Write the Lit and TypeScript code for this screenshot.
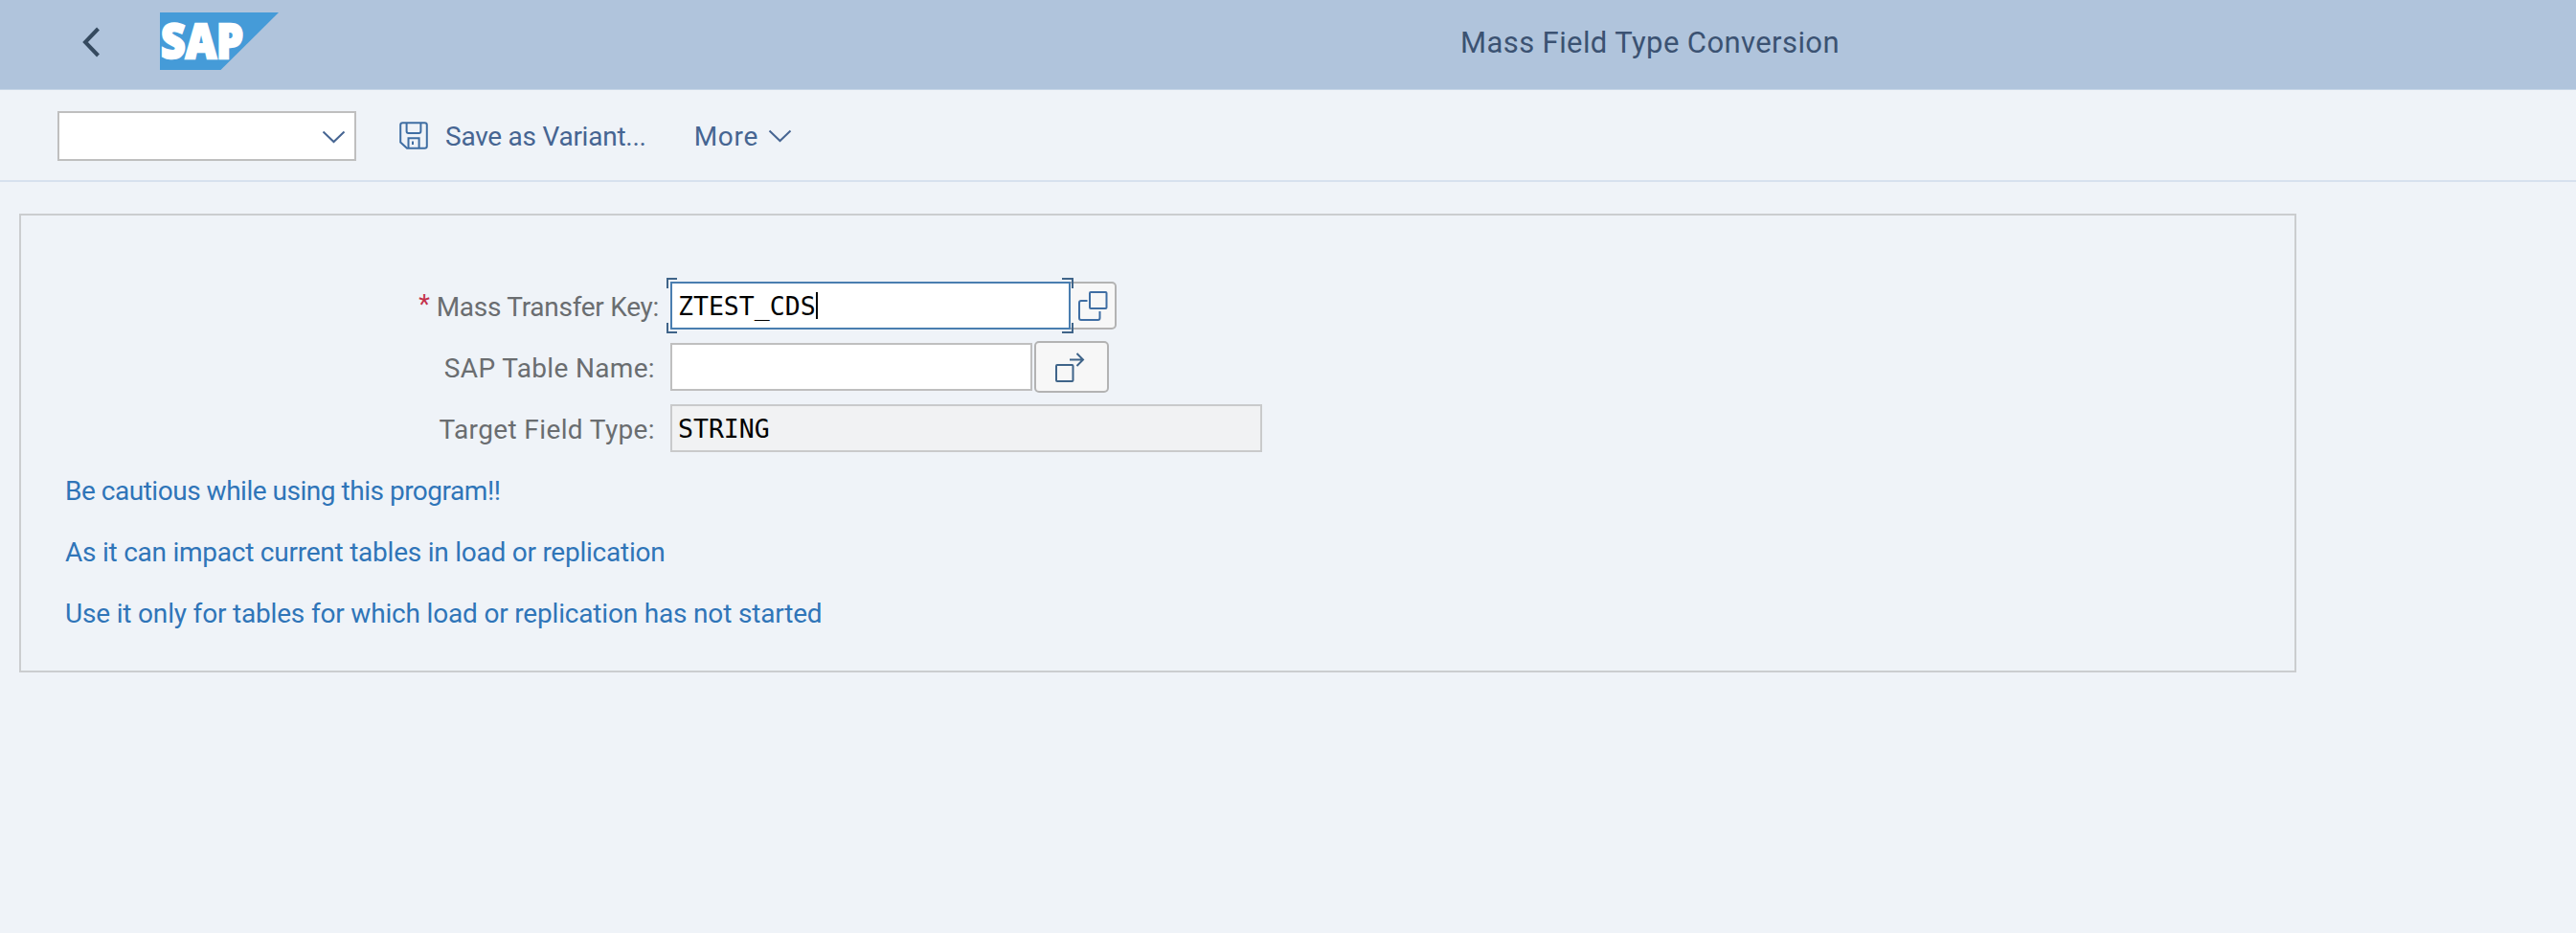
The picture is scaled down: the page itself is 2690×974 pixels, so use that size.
import { LitElement, html, css, svg } from 'lit';
import { customElement, property, state } from 'lit/decorators.js';

const chevronDown = svg`<path d="M1.5 1.5 L12.5 12 L23.5 1.5" fill="none" stroke="currentColor" stroke-width="2"/>`;

@customElement('shell-header')
class ShellHeader extends LitElement {
  @property() heading = '';

  static styles = css`
    :host {
      display: flex;
      align-items: flex-start;
      box-sizing: border-box;
      height: 94px;
      background: #b0c4dc;
      border-bottom: 1px solid #c6d5e7;
    }
    .back { width: 20px; height: 34px; margin: 27px 0 0 85px; }
    .logo { width: 124px; height: 60px; margin: 13px 0 0 62px; overflow: visible; }
    .logo text { font-family: "Open Sans", sans-serif; font-weight: 800; font-size: 50px; }
    .title {
      margin: 0 0 0 1234px;
      font-size: 31px;
      font-weight: 400;
      line-height: 90px;
      letter-spacing: 0.4px;
      color: #3b5272;
      white-space: nowrap;
    }
  `;

  render() {
    return html`
      <svg class="back" viewBox="0 0 20 34">
        <path d="M17.5 3 L4 17 L17.5 31" fill="none" stroke="#354a5f" stroke-width="4"/>
      </svg>
      <svg class="logo" viewBox="0 0 124 60">
        <path d="M0 0 H124 L63.5 60 H0 Z" fill="#459bd8"/>
        <text x="1" y="47.5" textLength="86" lengthAdjust="spacingAndGlyphs"
          fill="#fff" stroke="#fff" stroke-width="2.4">SAP</text>
      </svg>
      <h1 class="title">${this.heading}</h1>
    `;
  }
}

@customElement('action-bar')
class ActionBar extends LitElement {
  static styles = css`
    :host {
      display: flex;
      align-items: center;
      box-sizing: border-box;
      height: 96px;
      padding: 1px 0 0 60px;
      border-bottom: 2px solid #d7e1ee;
      color: #466592;
      font-size: 28px;
    }
    .combo {
      display: flex;
      align-items: center;
      justify-content: flex-end;
      box-sizing: border-box;
      width: 312px;
      height: 52px;
      padding: 2px 9px 0 0;
      background: #fff;
      border: 2px solid #bfbfbf;
    }
    .chevron { width: 25px; height: 14px; }
    .item { display: flex; align-items: center; line-height: 34px; padding-top: 2px; white-space: nowrap; }
    .save { margin-left: 45px; gap: 18px; letter-spacing: -0.25px; }
    .more { margin-left: 50px; gap: 10px; letter-spacing: 0.7px; }
    .disk { width: 30px; height: 29px; margin-top: -3px; }
    .item .chevron { margin-top: -2px; }
  `;

  render() {
    return html`
      <div class="combo"><svg class="chevron" viewBox="0 0 25 14">${chevronDown}</svg></div>
      <div class="item save">
        <svg class="disk" viewBox="0 0 30 29" fill="none" stroke="#3f6ea3" stroke-width="2">
          <path d="M3.5 1.2 H26.5 Q28.8 1.2 28.8 3.5 V25.5 Q28.8 27.8 26.5 27.8 H8 L1.2 21.5 V3.5 Q1.2 1.2 3.5 1.2 Z"/>
          <path d="M7.6 1.5 V10 Q7.6 11.9 9.5 11.9 H20.5 Q22.4 11.9 22.4 10 V1.5"/>
          <path d="M9.5 27.5 V17.3 H20.6 V27.5 M14 20.5 V24"/>
        </svg>
        <span>Save as Variant...</span>
      </div>
      <div class="item more">
        <span>More</span>
        <svg class="chevron" viewBox="0 0 25 14">${chevronDown}</svg>
      </div>
    `;
  }
}

@customElement('selection-form')
class SelectionForm extends LitElement {
  @state() private transferKey = 'ZTEST_CDS';
  @state() private fieldType = 'STRING';

  static styles = css`
    :host {
      display: block;
      box-sizing: border-box;
      width: 2378px;
      height: 479px;
      padding: 62px 0 0 46px;
      border: 2px solid #cbcdcf;
      font-size: 28px;
    }
    .row { display: flex; align-items: center; height: 64px; }
    .label {
      box-sizing: border-box;
      width: 616px;
      margin-right: 16px;
      padding-top: 4px;
      text-align: right;
      line-height: 60px;
      color: #6a6d70;
      white-space: nowrap;
    }
    .label.key { width: 620px; margin-right: 12px; letter-spacing: -0.28px; }
    .label.table { letter-spacing: 0.34px; }
    .label.target { letter-spacing: 0.38px; }
    .required { color: #c4314b; font-size: 27px; margin-right: 7px; vertical-align: 3px; line-height: 1; }
    .input {
      position: relative;
      display: flex;
      align-items: center;
      box-sizing: border-box;
      height: 50px;
      padding-left: 6px;
      background: #fff;
      border: 2px solid #bfbfbf;
      color: #000;
      font-family: "DejaVu Sans Mono", monospace;
      font-size: 26.5px;
    }
    .input.key { width: 418px; border-color: #4a7eb0; }
    .input.table { width: 378px; }
    .input.target { width: 618px; background: #f1f2f3; border-color: #c9cacb; }
    .caret { width: 2px; height: 28px; background: #000; }
    .focus { position: absolute; left: -7px; top: -7px; width: 427px; height: 60px; z-index: 1; }
    .button {
      display: flex;
      align-items: center;
      justify-content: center;
      box-sizing: border-box;
      background: #f7f7f7;
      border: 2px solid #b3b3b3;
      border-radius: 5px;
    }
    .button.help { width: 48px; height: 50px; border-left: 0; border-radius: 0 5px 5px 0; }
    .button.range { width: 78px; height: 54px; margin-left: 2px; padding-right: 4px; }
    .help svg { width: 32px; height: 32px; }
    .range svg { width: 32px; height: 32px; }
    .note { padding-top: 3px; box-sizing: border-box; color: #2f75b8; white-space: nowrap; }
    .note.caution { letter-spacing: -0.48px; }
    .note.impact { letter-spacing: -0.24px; }
    .note.usage { letter-spacing: -0.18px; }
  `;

  render() {
    return html`
      <div class="row">
        <div class="label key"><span class="required">*</span>Mass Transfer Key:</div>
        <div class="input key">
          <span>${this.transferKey}</span><span class="caret"></span>
          <svg class="focus" viewBox="0 0 427 60" fill="none" stroke="#3f6489" stroke-width="2">
            <path d="M12 2 H2 V12 M2 48 V58 H12 M414 2 H425 V12 M425 48 V58 H414"/>
          </svg>
        </div>
        <div class="button help">
          <svg viewBox="0 0 32 32" fill="none" stroke="#3f6ea3" stroke-width="2">
            <rect x="13" y="2" width="17.5" height="17" rx="1"/>
            <path d="M10.5 11 H4 Q2 11 2 13 V29 Q2 31 4 31 H21.5 Q23.5 31 23.5 29 V22"/>
          </svg>
        </div>
      </div>
      <div class="row">
        <div class="label table">SAP Table Name:</div>
        <div class="input table"></div>
        <div class="button range">
          <svg viewBox="0 0 32 32" fill="none" stroke="#3f6489" stroke-width="2">
            <rect x="2" y="14" width="17.5" height="17" rx="1"/>
            <path d="M16 8.5 H30 M23.5 2 L30 8.5 L23.5 15"/>
          </svg>
        </div>
      </div>
      <div class="row">
        <div class="label target">Target Field Type:</div>
        <div class="input target">${this.fieldType}</div>
      </div>
      <div class="row note caution">Be cautious while using this program!!</div>
      <div class="row note impact">As it can impact current tables in load or replication</div>
      <div class="row note usage">Use it only for tables for which load or replication has not started</div>
    `;
  }
}

@customElement('app-root')
class AppRoot extends LitElement {
  static styles = css`
    :host {
      display: flex;
      flex-direction: column;
      height: 100vh;
      overflow: hidden;
      background: #eff3f8;
      font-family: Roboto, sans-serif;
    }
    .content { padding: 33px 0 0 20px; }
  `;

  render() {
    return html`
      <shell-header heading="Mass Field Type Conversion"></shell-header>
      <action-bar></action-bar>
      <main class="content"><selection-form></selection-form></main>
    `;
  }
}
